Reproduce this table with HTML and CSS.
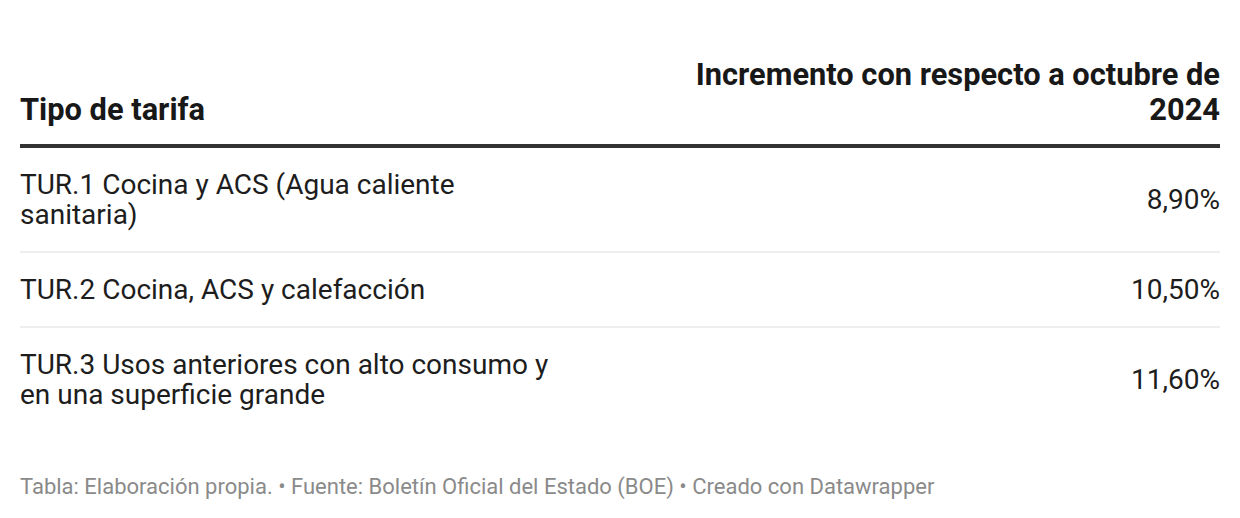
FILE: index.html
```html
<!DOCTYPE html>
<html lang="es">
<head>
<meta charset="utf-8">
<link rel="stylesheet" href="styles.css">
</head>
<body>
<div class="chart">
  <table class="tbl">
    <thead>
      <tr>
        <th class="col-name">Tipo de tarifa</th>
        <th class="col-val"><span class="val-head">Incremento con respecto a octubre de 2024</span></th>
      </tr>
    </thead>
    <tbody>
      <tr>
        <td class="col-name">TUR.1 Cocina y ACS (Agua caliente sanitaria)</td>
        <td class="col-val">8,90%</td>
      </tr>
      <tr>
        <td class="col-name">TUR.2 Cocina, ACS y calefacción</td>
        <td class="col-val">10,50%</td>
      </tr>
      <tr>
        <td class="col-name">TUR.3 Usos anteriores con alto consumo y en una superficie grande</td>
        <td class="col-val">11,60%</td>
      </tr>
    </tbody>
  </table>
  <div class="footer">Tabla: Elaboración propia. • Fuente: Boletín Oficial del Estado (BOE) • Creado con Datawrapper</div>
</div>
</body>
</html>
```

FILE: styles.css
```css
html, body {
  margin: 0;
  padding: 0;
  background: #ffffff;
}
body {
  font-family: Roboto, "Liberation Sans", Arial, sans-serif;
  color: #1d1d1d;
}
.chart {
  padding: 57px 20px 0 20px;
}
.tbl {
  width: 100%;
  border-collapse: collapse;
}
.tbl th {
  font-weight: 700;
  font-size: 30.8px;
  line-height: 35px;
  vertical-align: bottom;
  padding: 0 0 17px 0;
  border-bottom: 4px solid #333333;
  color: #181818;
}
.tbl td {
  font-size: 28px;
  line-height: 30px;
  vertical-align: middle;
  padding: 22px 0 21px 0;
  border-bottom: 2px solid #eeeeee;
}
.tbl tbody tr:last-child td {
  border-bottom: none;
}
.col-name {
  text-align: left;
  width: 545px;
}
.col-val {
  text-align: right;
}
.val-head {
  display: inline-block;
  max-width: 565px;
}
.footer {
  margin-top: 44px;
  font-size: 22px;
  line-height: 24px;
  color: #8a8a8a;
}
```
